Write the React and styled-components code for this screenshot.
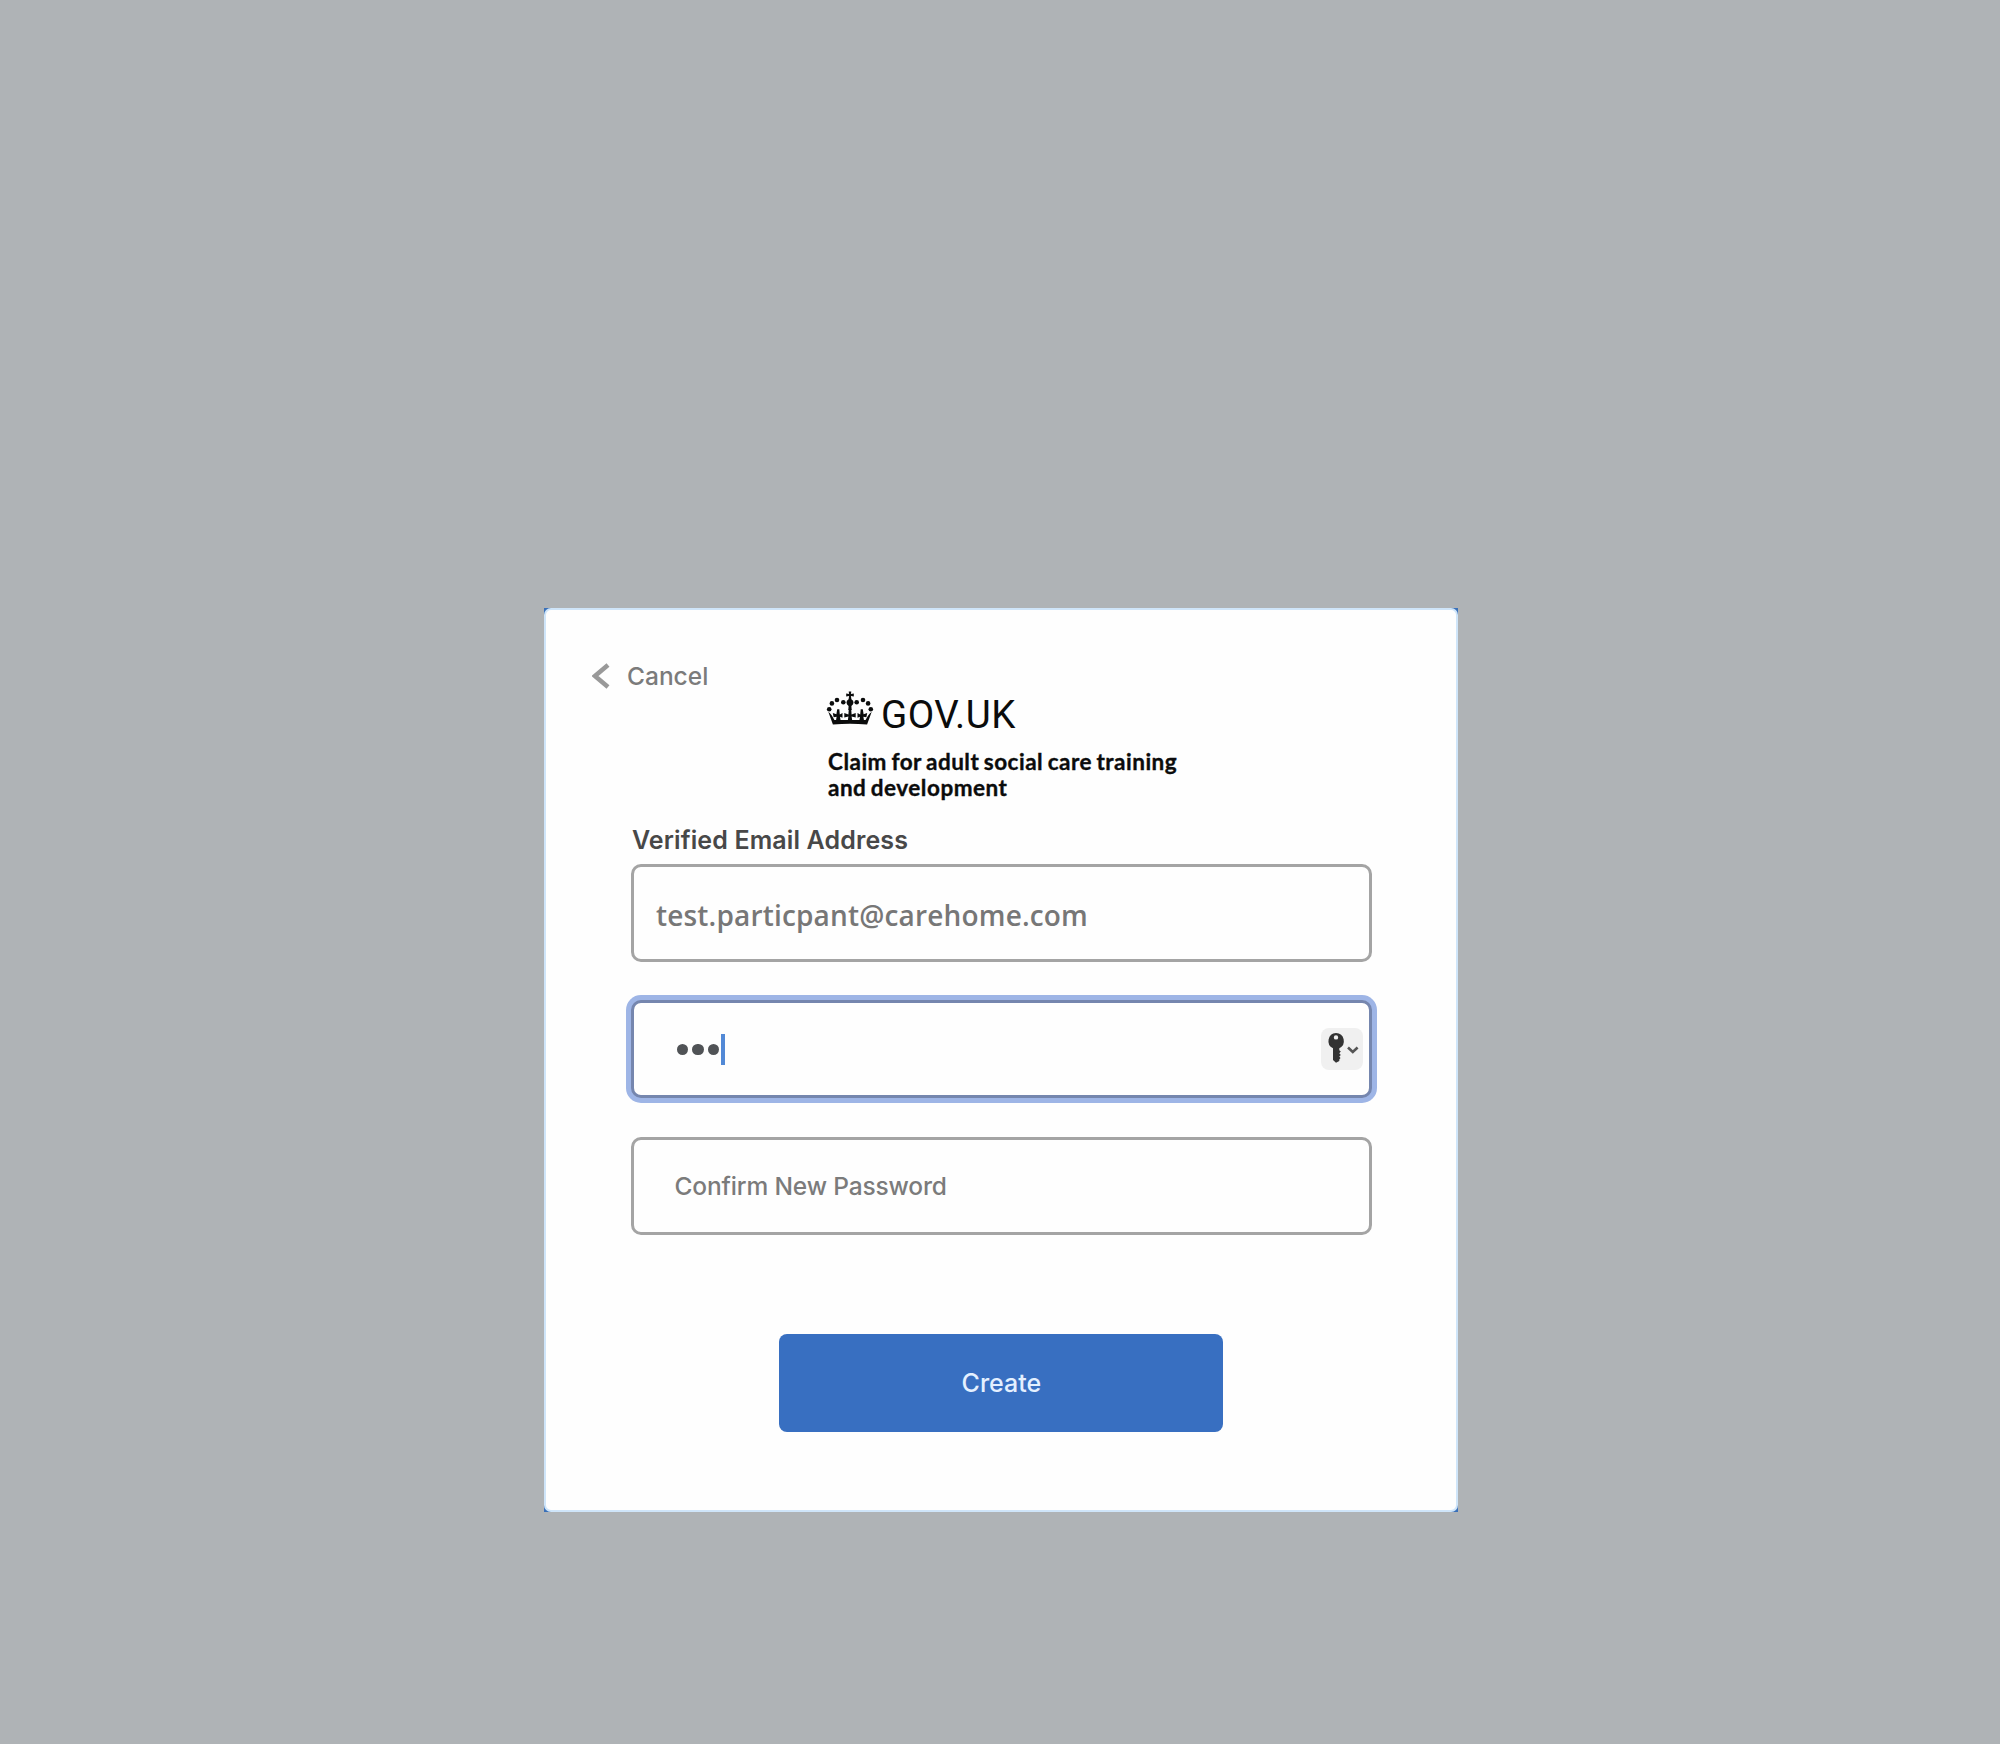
import React from 'react';
import styled, { createGlobalStyle } from 'styled-components';

const Global = createGlobalStyle`
  * { box-sizing: border-box; }
  body { margin: 0; background: #afb3b6; }
`;

const Page = styled.main`
  height: 1744px;
  padding: 608px 0 0 544px;
  background: #afb3b6;
  font-family: Inter, "Liberation Sans", sans-serif;
`;

const CardCorners = styled.div`
  width: 914px;
  height: 904px;
  background: #3a70b8;
`;

const Card = styled.section`
  display: flex;
  flex-direction: column;
  width: 914px;
  height: 904px;
  padding: 0 85px;
  background: #fefefe;
  border: 2px solid #cfe5f9;
  border-radius: 7px;
`;

const CancelLink = styled.a`
  display: flex;
  align-items: center;
  gap: 17px;
  height: 30px;
  margin: 50.5px 0 0 -39px;
  color: #7b7b7b;
  font-size: 24.5px;
  font-weight: 500;
  line-height: 30px;
`;

const Brand = styled.header`
  height: 112px;
  margin: -0.5px 0 0 197px;
  color: #0b0c0c;
`;

const BrandRow = styled.div`
  display: flex;
  align-items: flex-start;
  gap: 7px;
  height: 56px;
  padding-top: 0.8px;
`;

const BrandName = styled.span`
  margin-top: 4px;
  font-family: Roboto, sans-serif;
  font-size: 38.5px;
  letter-spacing: 0.5px;
  line-height: 40px;
`;

const Service = styled.h1`
  margin: 3px 0 0;
  font-family: Lato, sans-serif;
  font-size: 22.5px;
  font-weight: 700;
  letter-spacing: 0.5px;
  word-spacing: -1.5px;
  line-height: 25.7px;
  white-space: nowrap;
  -webkit-text-stroke: 0.35px currentColor;
`;

const Label = styled.label`
  height: 30px;
  margin: 23px 0 9px 1px;
  color: #484848;
  font-size: 25px;
  font-weight: 600;
  letter-spacing: 0.12px;
  line-height: 30px;
`;

const Fields = styled.div`
  display: flex;
  flex-direction: column;
  gap: 38.4px;
`;

const Field = styled.div`
  display: flex;
  align-items: center;
  width: 741px;
  height: 98px;
  padding-left: ${(p) => p.$inset || 40.5}px;
  padding-right: 6px;
  border: 3px solid ${(p) => (p.$focused ? '#7586ae' : '#a4a4a4')};
  border-radius: 10px;
  box-shadow: ${(p) => (p.$focused ? '0 0 0 5px #9eb5e6' : 'none')};
  background: #fefefe;
`;

const Email = styled.span`
  padding-top: 3px;
  color: #777;
  font-family: "Open Sans", "Noto Sans", sans-serif;
  font-size: 28px;
  font-weight: 600;
  letter-spacing: 0.17px;
`;

const Placeholder = styled.span`
  color: #7b7b7b;
  font-size: 24.5px;
  font-weight: 500;
  letter-spacing: -0.15px;
`;

const Dots = styled.div`
  display: flex;
  gap: 4px;
  margin-left: 2px;
`;

const Dot = styled.i`
  width: 11.5px;
  height: 11.5px;
  border-radius: 50%;
  background: #505356;
`;

const Caret = styled.i`
  width: 4px;
  height: 31px;
  margin-left: 1.5px;
  background: #5289d6;
`;

const KeyButton = styled.button`
  width: 42px;
  height: 42px;
  margin-left: auto;
  padding: 0;
  border: 0;
  border-radius: 8px;
  background: #f0f0f0;

  svg {
    display: block;
  }
`;

const Submit = styled.button`
  width: 444px;
  height: 98px;
  margin: 99.400px 0 0 148.400px;
  border: 0;
  border-radius: 8px;
  background: #386fc1;
  color: #e4f0ff;
  font-family: inherit;
  font-size: 25px;
  font-weight: 500;
`;

const pearls = [
  [1.2, 18.3],
  [3.9, 12.4],
  [9, 9],
  [15.3, 11.2],
  [28.7, 11.2],
  [35, 9],
  [40.1, 12.4],
  [42.8, 18.3],
];

function Crown() {
  return (
    <svg width="46" height="36" viewBox="0 0 46 36" fill="currentColor" overflow="visible">
      {pearls.map(([x, y]) => (
        <circle key={`${x}-${y}`} cx={x} cy={y} r="2.3" />
      ))}
      <path d="M20.7 0.6h2.6l-.4 2.500 2.900-.5v3l-2.900-.5.5 3.100q2.300 1.200 2.100 3.600-.2 2-2.100 3.300l.3 4h-3.400l.3-4q-1.900-1.300-2.100-3.300-.2-2.400 2.100-3.600l.5-3.100-2.900.5v-3l2.900.5z" />
      <path d="M.3 20.800q2 1.400 3.500 3.700 1.600 2.500 2.600 4.600h31.200q1-2.100 2.600-4.600 1.500-2.300 3.500-3.700l-4.600 12.800Q22 32 4.900 33.600z" />
      <path d="M9.200 18.200h2.100l.5 5.200 2.700-1.300v4.600l-2.500-1 .8 5H7.800l.8-5-3 .6-.8-4.200 3.600 1.200zM32.700 18.200h2.100l.8 5.100 3.600-1.200-.8 4.200-3-.6.8 5h-5l.8-5-2.500 1v-4.600l2.700 1.300zM20.800 18h2.400l.4 5.500 4.100-1.400v4.500l-4.100-1.100.8 5.200h-4.800l.8-5.200-4.100 1.100v-4.500l4.100 1.400z" />
    </svg>
  );
}

function KeyIcon() {
  return (
    <svg width="42" height="42" viewBox="0 0 42 42">
      <path
        fillRule="evenodd"
        fill="#333"
        d="M15 5a8 8 0 0 1 3.300 15.200v2l1.500 1.400-1.500 1.700 1.500 1.600-1.500 1.600 1.200 1.400-1.200 1.500v1.500L15 34.800 12 32V20.200A8 8 0 0 1 15 5zm0 2.200a2.200 2.200 0 1 0 0 4.400 2.200 2.200 0 0 0 0-4.400z"
      />
      <path d="m27 19.500 4.800 4.500 4.800-4.500" fill="none" stroke="#555" strokeWidth="2.600" />
    </svg>
  );
}

export default function App() {
  return (
    <Page>
      <Global />
      <CardCorners>
        <Card>
          <CancelLink>
            <svg width="18" height="26" viewBox="0 0 18 26" fill="none" stroke="#999" strokeWidth="4.500">
              <path d="M16 2 3 13 16 24" />
            </svg>
            Cancel
          </CancelLink>
          <Brand>
            <BrandRow>
              <Crown />
              <BrandName>GOV.UK</BrandName>
            </BrandRow>
            <Service>
              Claim for adult social care training
              <br />
              and development
            </Service>
          </Brand>
          <Label>Verified Email Address</Label>
          <Fields>
            <Field $inset={22}>
              <Email>test.particpant@carehome.com</Email>
            </Field>
            <Field $focused>
              <Dots>
                <Dot />
                <Dot />
                <Dot />
              </Dots>
              <Caret />
              <KeyButton aria-label="Passwords">
                <KeyIcon />
              </KeyButton>
            </Field>
            <Field>
              <Placeholder>Confirm New Password</Placeholder>
            </Field>
          </Fields>
          <Submit>Create</Submit>
        </Card>
      </CardCorners>
    </Page>
  );
}
